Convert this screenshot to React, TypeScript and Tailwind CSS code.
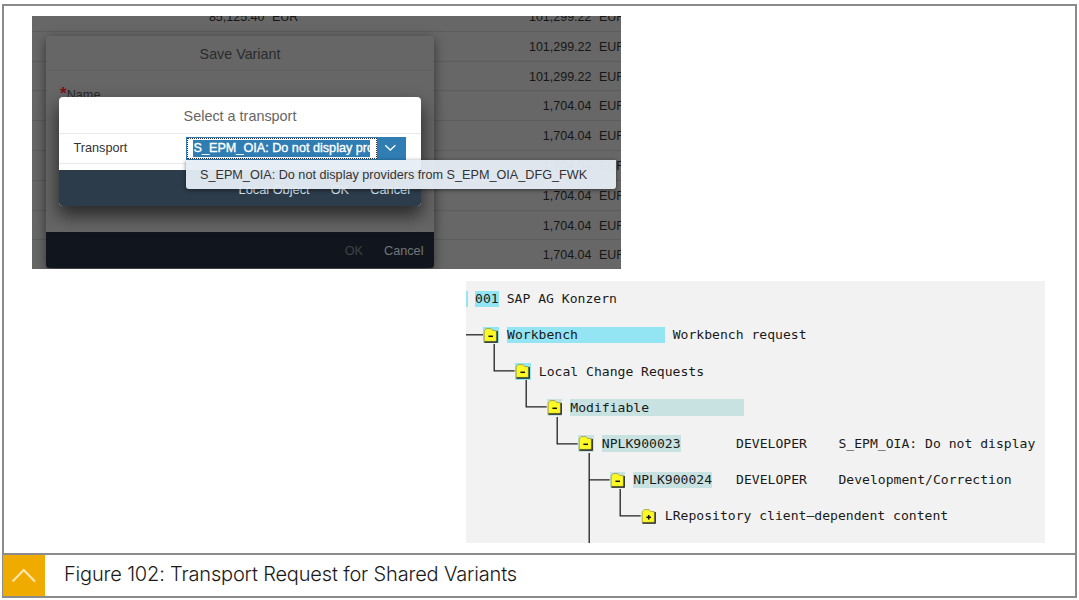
import React from "react";

const amounts = [
  "101,299.22",
  "101,299.22",
  "101,299.22",
  "1,704.04",
  "1,704.04",
  "1,704.04",
  "1,704.04",
  "1,704.04",
  "1,704.04",
];

function AmountTable() {
  return (
    <div className="-mt-[14px] flex flex-col text-[12.5px] text-[#161616]">
      {amounts.map((amount, i) => (
        <div
          key={i}
          className="flex h-[29.8px] shrink-0 items-center border-b border-[#5d5d5d] pt-[2px] whitespace-nowrap"
        >
          <span className="w-[232.5px] shrink-0 text-right">{i === 0 ? "85,125.40" : ""}</span>
          <span className="ml-[7.5px] w-[40px] shrink-0">{i === 0 ? "EUR" : ""}</span>
          <span className="w-[279.5px] shrink-0 text-right">{amount}</span>
          <span className="ml-[7.5px] shrink-0">EUR</span>
        </div>
      ))}
    </div>
  );
}

function SaveVariantDialog() {
  return (
    <div className="absolute top-[19.5px] left-[14px] flex h-[232px] w-[388px] flex-col overflow-hidden rounded-[3px] bg-[#666666] shadow-[0_3px_12px_0_rgba(0,0,0,0.5)]">
      <div className="flex h-[35px] items-center justify-center border-b border-[#5f5f5f] pt-[5px] text-[14.3px] text-[#2b2b2b]">
        Save Variant
      </div>
      <div className="flex-1 px-[14px] pt-[14px] text-[12.7px] leading-[18px] text-[#2b2b2b]">
        <span className="text-[17px] leading-none font-bold text-[#7d1212]">*</span>Name
      </div>
      <div className="flex h-[36px] items-center justify-end gap-[21px] bg-[#11161e] pt-[4px] pr-[10.5px] text-[12.7px]">
        <span className="text-[#3c4249]">OK</span>
        <span className="text-[#71767c]">Cancel</span>
      </div>
    </div>
  );
}

function TransportDialog() {
  return (
    <div className="absolute top-[81px] left-[27px] flex h-[109px] w-[362px] flex-col overflow-hidden rounded-[4px] bg-white shadow-[0_9px_18px_1px_rgba(0,0,0,0.6)]">
      <div className="flex h-[36.5px] items-center justify-center border-b border-[#e9e9e9] pt-[5px] text-[14.4px] text-[#666666]">
        Select a transport
      </div>
      <div className="flex h-[30px] items-center border-b border-[#e9e9e9] pl-[14.5px] text-[12.7px]">
        <span className="w-[112px] pt-px text-[#333333]">Transport</span>
        <div className="flex h-[23px] w-[220.5px] border border-[#2f7db3]">
          <div className="flex flex-1 items-center border border-dotted border-[#333333] pl-[5px]">
            <span className="h-[17px] w-[177px] overflow-hidden bg-[#2f7db3] pl-px text-[12.65px] leading-[17px] whitespace-nowrap text-white [-webkit-text-stroke:0.35px_white]">
              S_EPM_OIA: Do not display providers
            </span>
          </div>
          <div className="flex w-[28.5px] items-center justify-center bg-[#2f7db3]">
            <svg width="13" height="8" viewBox="0 0 13 8" fill="none" stroke="white" strokeWidth="1.3">
              <path d="M1.2 1.2 6.3 6 11.4 1.2" />
            </svg>
          </div>
        </div>
      </div>
      <div className="h-[6.5px] bg-white" />
      <div className="flex flex-1 items-center justify-end gap-[21px] bg-[#2c3c4a] pt-[2.5px] pr-[11px] text-[12.8px] text-[#d3e2ef]">
        <span>Local Object</span>
        <span>OK</span>
        <span>Cancel</span>
      </div>
    </div>
  );
}

function AppScreen() {
  return (
    <div className="relative ml-[28px] h-[253px] w-[588.5px] overflow-hidden bg-[#676767]">
      <AmountTable />
      <SaveVariantDialog />
      <TransportDialog />
      <div className="absolute top-[144px] left-[154px] flex h-[28.5px] w-[430px] items-center rounded-b-[3px] bg-[#e6edf6]/95 pt-[2px] pl-[14px] text-[12.65px] whitespace-nowrap text-[#333333] shadow-[0_1px_4px_rgba(0,0,0,0.5)]">
        S_EPM_OIA: Do not display providers from S_EPM_OIA_DFG_FWK
      </div>
    </div>
  );
}

function Folder({ plus = false, halo = "" }: { plus?: boolean; halo?: string }) {
  return (
    <span className={"flex h-[16.5px] w-[15.5px] shrink-0 " + halo}>
      <svg width="15.5" height="16.5" viewBox="0 0 15.5 16.5" fill="none">
        <path d="M1.2 14.4V4L3.2 1.6H8L9.8 3.6H13.4V14.4Z" fill="#fdf926" stroke="#8c8c3c" strokeWidth="0.7" />
        <path d="M14.2 4V15.2H1.4" stroke="#17170a" strokeWidth="1.2" />
        <path d="M5.4 9.3H10" stroke="#111" strokeWidth="1.5" />
        {plus && <path d="M7.7 7V11.6" stroke="#111" strokeWidth="1.5" />}
      </svg>
    </span>
  );
}

function Elbow({ indent, tail = false }: { indent: string; tail?: boolean }) {
  return (
    <svg
      className={"shrink-0 overflow-visible " + indent}
      width="20.7"
      height="36"
      viewBox="0 0 20.7 36"
      fill="none"
      stroke="#222"
      strokeWidth="1.3"
    >
      <path d={tail ? "M0.2 -9V81.6M0.2 17.8H20.7" : "M0.2 -9V17.8H20.7"} />
    </svg>
  );
}

function Row({ children }: { children: React.ReactNode }) {
  return <div className="flex h-[36.15px] items-center whitespace-pre">{children}</div>;
}

const label = "flex h-[16.5px] items-center ml-[8.2px]";

function RequestTree() {
  return (
    <div className="mt-[12px] ml-[462.4px] h-[262px] w-[578.6px] overflow-hidden bg-[#f2f2f2] font-['DejaVu_Sans_Mono',monospace] text-[13.08px] text-[#1a1a1a]">
      <Row>
        <span className="h-[16.5px] w-[1.5px] bg-[#93e5f4]" />
        <span className="ml-[7.2px] flex h-[16.5px] items-center bg-[#93e5f4]">001</span>
        <span className="ml-[8px]">SAP AG Konzern</span>
      </Row>
      <Row>
        <svg width="17" height="36" viewBox="0 0 17 36" stroke="#222" strokeWidth="1.3">
          <path d="M0 17.8H17" />
        </svg>
        <Folder halo="bg-[#93e5f4]" />
        <span className={label + " w-[158px] bg-[#93e5f4]"}>Workbench</span>
        <span className="ml-[7.6px]">Workbench request</span>
      </Row>
      <Row>
        <Elbow indent="ml-[28px]" />
        <Folder halo="bg-[#93e5f4]" />
        <span className={label}>Local Change Requests</span>
      </Row>
      <Row>
        <Elbow indent="ml-[59.5px]" />
        <Folder halo="bg-[#c8e2e2]" />
        <span className={label + " w-[174px] bg-[#c8e2e2]"}>Modifiable</span>
      </Row>
      <Row>
        <Elbow indent="ml-[91px]" />
        <Folder halo="bg-[#c8e2e2]" />
        <span className={label + " bg-[#c8e2e2]"}>NPLK900023</span>
        <span className="ml-[55.5px]">DEVELOPER</span>
        <span className="ml-[31.6px]">S_EPM_OIA: Do not display</span>
      </Row>
      <Row>
        <Elbow indent="ml-[122.5px]" tail />
        <Folder halo="bg-[#c8e2e2]" />
        <span className={label + " bg-[#c8e2e2]"}>NPLK900024</span>
        <span className="ml-[24px]">DEVELOPER</span>
        <span className="ml-[31.6px]">Development/Correction</span>
      </Row>
      <Row>
        <Elbow indent="ml-[154px]" />
        <Folder plus />
        <span className={label}>LRepository client–dependent content</span>
      </Row>
    </div>
  );
}

export default function App() {
  return (
    <div className="h-[600px] w-[1079px] overflow-hidden bg-white pt-[4px] pl-[2px] font-['Liberation_Sans',Arial,sans-serif]">
      <div className="flex h-[594px] w-[1075px] flex-col border-2 border-[#8b8a8d]">
        <div className="h-[549px] border-b-2 border-[#8b8a8d] pt-[10px]">
          <AppScreen />
          <RequestTree />
        </div>
        <div className="flex flex-1 items-stretch">
          <div className="-ml-px flex w-[42px] items-center justify-center bg-[#f0ab00]">
            <svg width="26" height="16" viewBox="0 0 26 16" fill="none" stroke="#fbe6ae" strokeWidth="2.2">
              <path d="M1.5 13.5 12.7 2 24 13.5" />
            </svg>
          </div>
          <div className="ml-[19px] pt-[4px] font-['Inter',sans-serif] text-[20px] leading-[30px] font-light tracking-[-0.17px] text-[#1a1a1a]">
            Figure 102: Transport Request for Shared Variants
          </div>
        </div>
      </div>
    </div>
  );
}
